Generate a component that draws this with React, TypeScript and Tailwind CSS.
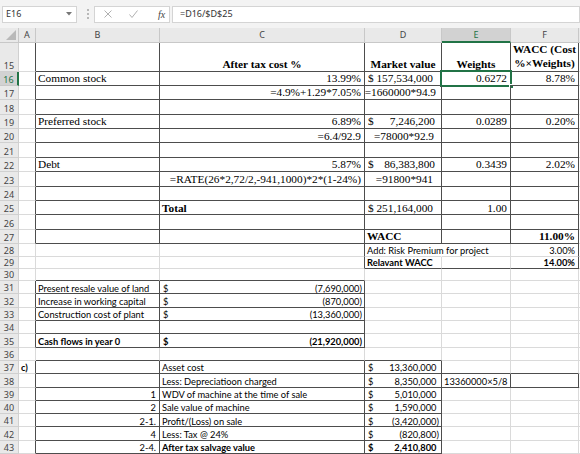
import React from 'react'

const serif = "font-['Liberation_Serif',serif] text-[11.3px]"
const cal = "font-['Lato',sans-serif] text-[9.3px]"
const ui = "font-['Noto_Sans',sans-serif] text-[9px]"

type Box = { r0: number; r1: number; c0: number; c1: number; all: boolean }

// bordered ranges, columns: 0 = row header, 1 = A ... 6 = F
const boxes: Box[] = [
  { r0: 15, r1: 27, c0: 2, c1: 6, all: true },
  { r0: 28, r1: 29, c0: 4, c1: 6, all: false },
  { r0: 31, r1: 35, c0: 2, c1: 3, all: true },
  { r0: 37, r1: 43, c0: 2, c1: 4, all: true },
  { r0: 38, r1: 38, c0: 5, c1: 6, all: true },
]

const within = (x: number, a: number, b: number) => x >= a && x <= b

function rightDark(r: number, c: number) {
  return boxes.some(b =>
    within(r, b.r0, b.r1) && (b.all ? within(c, b.c0 - 1, b.c1) : c === b.c0 - 1 || c === b.c1)
  )
}

function bottomDark(r: number, c: number) {
  return boxes.some(b =>
    within(c, b.c0, b.c1) && (b.all ? within(r, b.r0 - 1, b.r1) : r === b.r0 - 1 || r === b.r1)
  )
}

const Pad = () => <span className="invisible">)</span>

// accounting style: $ on the left, amount on the right
function Acct({ v, bold, times }: { v: string; bold?: boolean; times?: boolean }) {
  const neg = v.startsWith('(')
  return (
    <div className={`flex w-full justify-between ${times ? 'pl-[3px] pr-[6px]' : 'pl-[3px] pr-[2px]'} ${bold ? 'font-bold' : ''}`}>
      <span>$</span>
      <span>
        {v}
        {!neg && !times && <Pad />}
      </span>
    </div>
  )
}

type Content = { node: React.ReactNode; cls: string }

const R = (t: string, f = serif, extra = '') => ({ node: t, cls: `${f} justify-end pr-[3px] ${extra}` })
const L = (t: string, f = serif, extra = '') => ({ node: t, cls: `${f} justify-start pl-[2px] ${extra}` })
const Ctr = (t: React.ReactNode, extra = '') => ({ node: t, cls: `${serif} justify-center font-bold ${extra}` })

const content: Record<string, Content> = {
  '15-3': Ctr('After tax cost %'),
  '15-4': Ctr('Market value'),
  '15-5': Ctr('Weights'),
  '15-6': Ctr(
    <div className="text-center leading-[14px]">
      WACC (Cost
      <br />
      %×Weights)
    </div>
  ),
  '16-2': L('Common stock'),
  '16-3': R('13.99%'),
  '16-4': { node: <div className={`pl-[3px] ${serif}`}>$ 157,534,000</div>, cls: 'justify-start' },
  '16-5': R('0.6272'),
  '16-6': R('8.78%'),
  '17-3': R('=4.9%+1.29*7.05%'),
  '17-4': R('=1660000*94.9', serif, 'pr-[5px]'),
  '19-2': L('Preferred stock'),
  '19-3': R('6.89%'),
  '19-4': { node: <Acct v="7,246,200" times />, cls: serif },
  '19-5': R('0.0289'),
  '19-6': R('0.20%'),
  '20-3': R('=6.4/92.9'),
  '20-4': R('=78000*92.9', serif, 'pr-[7px]'),
  '22-2': L('Debt'),
  '22-3': R('5.87%'),
  '22-4': { node: <Acct v="86,383,800" times />, cls: serif },
  '22-5': R('0.3439'),
  '22-6': R('2.02%'),
  '23-3': R('=RATE(26*2,72/2,-941,1000)*2*(1-24%)'),
  '23-4': R('=91800*941', serif, 'pr-[8px]'),
  '25-3': L('Total', serif, 'font-bold'),
  '25-4': { node: <div className={`pl-[3px] ${serif}`}>$ 251,164,000</div>, cls: 'justify-start' },
  '25-5': R('1.00', serif, 'pr-[3px]'),
  '27-4': L('WACC', serif, 'font-bold'),
  '27-6': R('11.00%', serif, 'font-bold'),
  '28-4': L('Add: Risk Premium for project', cal, 'whitespace-nowrap overflow-visible z-10'),
  '28-6': R('3.00%', cal),
  '29-4': L('Relavant WACC', cal, 'font-bold'),
  '29-6': R('14.00%', cal, 'font-bold'),
  '31-2': L('Present resale value of land', cal),
  '31-3': { node: <Acct v="(7,690,000)" />, cls: cal },
  '32-2': L('Increase in working capital', cal),
  '32-3': { node: <Acct v="(870,000)" />, cls: cal },
  '33-2': L('Construction cost of plant', cal),
  '33-3': { node: <Acct v="(13,360,000)" />, cls: cal },
  '35-2': L('Cash flows in year 0', cal, 'font-bold'),
  '35-3': { node: <Acct v="(21,920,000)" bold />, cls: cal },
  '37-1': L('c)', cal, 'font-bold'),
  '37-3': L('Asset cost', cal),
  '37-4': { node: <Acct v="13,360,000" />, cls: cal },
  '38-3': L('Less: Depreciatioon charged', cal),
  '38-4': { node: <Acct v="8,350,000" />, cls: cal },
  '38-5': L('13360000×5/8', cal, 'whitespace-nowrap'),
  '39-2': R('1', cal, 'pr-[2px]'),
  '39-3': L('WDV of machine at the time of sale', cal),
  '39-4': { node: <Acct v="5,010,000" />, cls: cal },
  '40-2': R('2', cal, 'pr-[2px]'),
  '40-3': L('Sale value of machine', cal),
  '40-4': { node: <Acct v="1,590,000" />, cls: cal },
  '41-2': R('2-1.', cal, 'pr-[2px]'),
  '41-3': L('Profit/(Loss) on sale', cal),
  '41-4': { node: <Acct v="(3,420,000)" />, cls: cal },
  '42-2': R('4', cal, 'pr-[2px]'),
  '42-3': L('Less: Tax @ 24%', cal),
  '42-4': { node: <Acct v="(820,800)" />, cls: cal },
  '43-2': R('2-4.', cal, 'pr-[2px]'),
  '43-3': L('After tax salvage value', cal, 'font-bold'),
  '43-4': { node: <Acct v="2,410,800" bold />, cls: cal },
}

const rows = Array.from({ length: 29 }, (_, i) => 15 + i)
const letters = ['A', 'B', 'C', 'D', 'E', 'F']

function FormulaBar() {
  return (
    <div className={`flex h-[28px] items-center bg-[#f3f3f3] ${ui} text-[#333]`}>
      <div className="ml-[2px] flex h-[17px] w-[75px] items-center justify-between border border-[#d4d4d4] bg-white pl-[3px] pr-[4px]">
        <span>E16</span>
        <svg width="6" height="4" viewBox="0 0 6 4">
          <path d="M0 0h6L3 3.5z" fill="#777" />
        </svg>
      </div>
      <div className="ml-[6px] flex w-[10px] flex-col items-center gap-[2px]">
        <span className="h-[2px] w-[2px] bg-[#b8b8b8]" />
        <span className="h-[2px] w-[2px] bg-[#b8b8b8]" />
        <span className="h-[2px] w-[2px] bg-[#b8b8b8]" />
      </div>
      <div className="ml-[1px] flex h-[17px] w-[76px] items-center border border-[#d4d4d4] bg-white">
        <svg className="ml-[9px]" width="8" height="8" viewBox="0 0 8 8">
          <path d="M0.5 0.5l7 7M7.5 0.5l-7 7" stroke="#b0b0b0" strokeWidth="1" />
        </svg>
        <svg className="ml-[17px]" width="9" height="8" viewBox="0 0 9 8">
          <path d="M0.5 4.5l2.5 3L8.5 0.5" stroke="#b0b0b0" strokeWidth="1" fill="none" />
        </svg>
        <span className="ml-[20px] font-['Liberation_Serif',serif] text-[10px] italic text-[#444]">fx</span>
      </div>
      <div className="ml-[2px] flex h-[17px] flex-1 items-center border border-[#d4d4d4] bg-white pl-[7px]">
        =D16/$D$25
      </div>
    </div>
  )
}

export default function App() {
  return (
    <div className="h-[454px] w-[580px] overflow-hidden bg-white text-black">
      <FormulaBar />
      <div className="grid grid-cols-[19px_17px_124px_205px_77px_69px_68px_1px] grid-rows-[15px_28.5px_repeat(12,14.4px)_12.5px_12.5px_12px_repeat(13,13.3px)]">
        {/* column headers */}
        <div className="relative border-b border-r border-[#c8c8c8] bg-[#e9e9e9]">
          <svg className="absolute bottom-[2px] right-[2px]" width="10" height="10" viewBox="0 0 10 10">
            <path d="M10 0v10H0z" fill="#b9b9b9" />
          </svg>
        </div>
        {letters.map(l => (
          <div
            key={l}
            className={`flex items-center justify-center border-r border-[#c8c8c8] ${ui} ${
              l === 'E'
                ? 'border-b-2 border-b-[#217346] bg-[#d2d2d2] text-[#217346]'
                : 'border-b border-b-[#c8c8c8] bg-[#e9e9e9] text-[#444]'
            }`}
          >
            {l}
          </div>
        ))}
        <div className="border-b border-[#c8c8c8] bg-[#e9e9e9]" />

        {rows.map(r => (
          <React.Fragment key={r}>
            <div
              className={`flex items-end justify-center pb-[1px] leading-none ${ui} ${
                r === 16
                  ? 'border-b border-r-2 border-b-[#c8c8c8] border-r-[#217346] bg-[#d2d2d2] text-[#217346]'
                  : 'border-b border-r border-[#d0d0d0] bg-[#e9e9e9] text-[#444]'
              }`}
            >
              {r}
            </div>
            {[1, 2, 3, 4, 5, 6].map(c => {
              const item = content[`${r}-${c}`]
              const rd = rightDark(r, c)
              const bd = bottomDark(r, c)
              const noRight = r === 28 && c === 4
              return (
                <div
                  key={c}
                  className={`relative flex items-end border-b border-r pb-[0.5px] leading-none ${
                    noRight ? 'border-r-transparent' : rd ? 'border-r-[#4d4d4d]' : 'border-r-[#dadada]'
                  } ${bd ? 'border-b-[#4d4d4d]' : 'border-b-[#dadada]'} ${item ? item.cls : ''}`}
                >
                  {item?.node}
                  {r === 16 && c === 5 && (
                    <div className="pointer-events-none absolute inset-[-2px] border-2 border-[#217346]">
                      <div className="absolute bottom-[-4px] right-[-4px] h-[5px] w-[5px] border border-white bg-[#217346]" />
                    </div>
                  )}
                </div>
              )
            })}
            <div className="border-b border-[#dadada]" />
          </React.Fragment>
        ))}
      </div>
    </div>
  )
}
